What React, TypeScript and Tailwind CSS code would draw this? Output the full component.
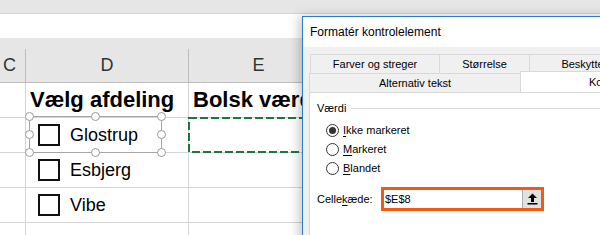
import React from "react";

const handles: [number, number][] = [
  [0, 0],
  [66, 0],
  [132, 0],
  [0, 18],
  [132, 18],
  [0, 36],
  [66, 36],
  [132, 36],
];

function Cell({ w, children, className = "" }: { w: string; children?: React.ReactNode; className?: string }) {
  return <div className={`${w} shrink-0 border-r border-[#d4d4d4] flex items-center ${className}`}>{children}</div>;
}

function CheckRow({ label }: { label: string }) {
  return (
    <div className="flex h-[35px] border-b border-[#d4d4d4]">
      <Cell w="w-[26px]" />
      <Cell w="w-[163px]" className="pl-[12px] gap-[10px]">
        <span className="w-[22px] h-[22px] border-2 border-[#111] bg-white" />
        <span className="text-[18px] text-black">{label}</span>
      </Cell>
      <Cell w="w-[140px]" />
      <div className="flex-1" />
    </div>
  );
}

function Radio({ checked, u, rest }: { checked?: boolean; u: string; rest: string }) {
  return (
    <div className="flex items-center h-[19px] gap-[4px] pl-[9px]">
      <span className="w-[13px] h-[13px] rounded-full border border-[#333] bg-white flex items-center justify-center">
        {checked && <span className="w-[7px] h-[7px] rounded-full bg-[#333]" />}
      </span>
      <span>
        <u className="underline-offset-2">{u}</u>
        {rest}
      </span>
    </div>
  );
}

export default function App() {
  return (
    <div className="relative w-[600px] h-[235px] overflow-hidden bg-white font-['Liberation_Sans',Arial,sans-serif]">
      {/* top chrome */}
      <div className="h-[14px] bg-[#e6e6e6] border-b border-[#d4d4d4]" />
      <div className="h-[24px] bg-white" />
      <div className="h-[11px] bg-[#e6e6e6]" />

      {/* column headers */}
      <div className="flex h-[34px] bg-[#e6e6e6] border-b border-[#bdbdbd] text-[18px] text-[#333]">
        <div className="w-[26px] shrink-0 border-r border-[#bdbdbd] flex items-center pl-[3px]">C</div>
        <div className="w-[163px] shrink-0 border-r border-[#bdbdbd] flex items-center justify-center">D</div>
        <div className="w-[140px] shrink-0 border-r border-[#bdbdbd] flex items-center justify-center">E</div>
        <div className="flex-1" />
      </div>

      {/* row 1 */}
      <div className="flex h-[35px] border-b border-[#d4d4d4] text-[22px] font-bold text-black leading-[26px] whitespace-nowrap">
        <Cell w="w-[26px]" />
        <Cell w="w-[163px]" className="pl-[4px]">Vælg afdeling</Cell>
        <Cell w="w-[140px]" className="pl-[4px]">Bolsk værdi</Cell>
        <div className="flex-1" />
      </div>

      {/* row 2 with copy marquee */}
      <div className="relative">
        <CheckRow label="Glostrup" />
        <svg className="absolute left-[188px] top-[-1px]" width="160" height="36">
          <rect x="1" y="1" width="170" height="34" fill="none" stroke="#217346" strokeWidth="2" strokeDasharray="8 3" />
        </svg>
      </div>
      <CheckRow label="Esbjerg" />
      <CheckRow label="Vibe" />
      <div className="flex h-[35px]">
        <Cell w="w-[26px]" />
        <Cell w="w-[163px]" />
        <Cell w="w-[140px]" />
      </div>

      {/* selected control frame */}
      <div className="absolute left-[29px] top-[116px] w-[133px] h-[37px] border border-[#a6a6a6]">
        {handles.map(([x, y], i) => (
          <span
            key={i}
            className="absolute w-[9px] h-[9px] rounded-full border-[1.5px] border-[#9a9a9a] bg-white"
            style={{ left: x - 5, top: y - 5 }}
          />
        ))}
      </div>

      {/* dialog */}
      <div className="absolute left-[302px] top-[16px] w-[320px] h-[240px] border border-[#2b7bd0] bg-white shadow-[-3px_0_10px_rgba(0,0,0,0.22)] text-[11px] text-black overflow-hidden">
        <div className="h-[30px] flex items-center pl-[7px] text-[12px]">Formatér kontrolelement</div>
        <div className="h-[210px] bg-[#f0f0f0] pt-[7px] pl-[6px]">
          <div className="flex h-[19px] ml-px whitespace-nowrap">
            <div className="w-[129px] shrink-0 border-t border-l border-[#d9d9d9] flex items-center justify-center">Farver og streger</div>
            <div className="w-[90px] shrink-0 border-t border-l border-[#d9d9d9] flex items-center justify-center">Størrelse</div>
            <div className="w-[120px] shrink-0 border-t border-l border-[#d9d9d9] flex items-center justify-center">Beskyttelse</div>
          </div>
          <div className="flex h-[19px] whitespace-nowrap">
            <div className="w-[211px] shrink-0 border-t border-l border-[#d9d9d9] flex items-center justify-center">Alternativ tekst</div>
            <div className="w-[120px] shrink-0 h-[21px] -mt-[2px] bg-white border-t border-l border-[#d9d9d9] relative z-10 flex items-center pl-[68px]">
              Kontrol
            </div>
          </div>
          <div className="h-[200px] bg-white border border-[#d9d9d9] pl-[7px] pt-[8px]">
            <div className="flex items-center h-[14px] gap-[5px]">
              <span>Værdi</span>
              <span className="flex-1 h-px bg-[#dcdcdc]" />
            </div>
            <div className="mt-[6px]">
              <Radio checked u="I" rest="kke markeret" />
              <Radio u="M" rest="arkeret" />
              <Radio u="B" rest="landet" />
            </div>
            <div className="flex items-center mt-[9px]">
              <span className="w-[64px]">
                Celle<u className="underline-offset-2">k</u>æde:
              </span>
              <div className="w-[163px] h-[24px] border-[3px] border-[#f05a14] flex bg-white">
                <div className="flex-1 flex items-center pl-px">$E$8</div>
                <div className="w-[19px] bg-[#e1e1e1] border-l border-[#adadad] flex items-center justify-center">
                  <svg width="11" height="12" viewBox="0 0 11 12">
                    <path d="M5.5 0.5 L10 5 L7 5 L7 9 L4 9 L4 5 L1 5 Z" fill="#000" />
                    <rect x="0.5" y="10" width="10" height="1.5" fill="#000" />
                  </svg>
                </div>
              </div>
            </div>
          </div>
        </div>
      </div>
    </div>
  );
}
